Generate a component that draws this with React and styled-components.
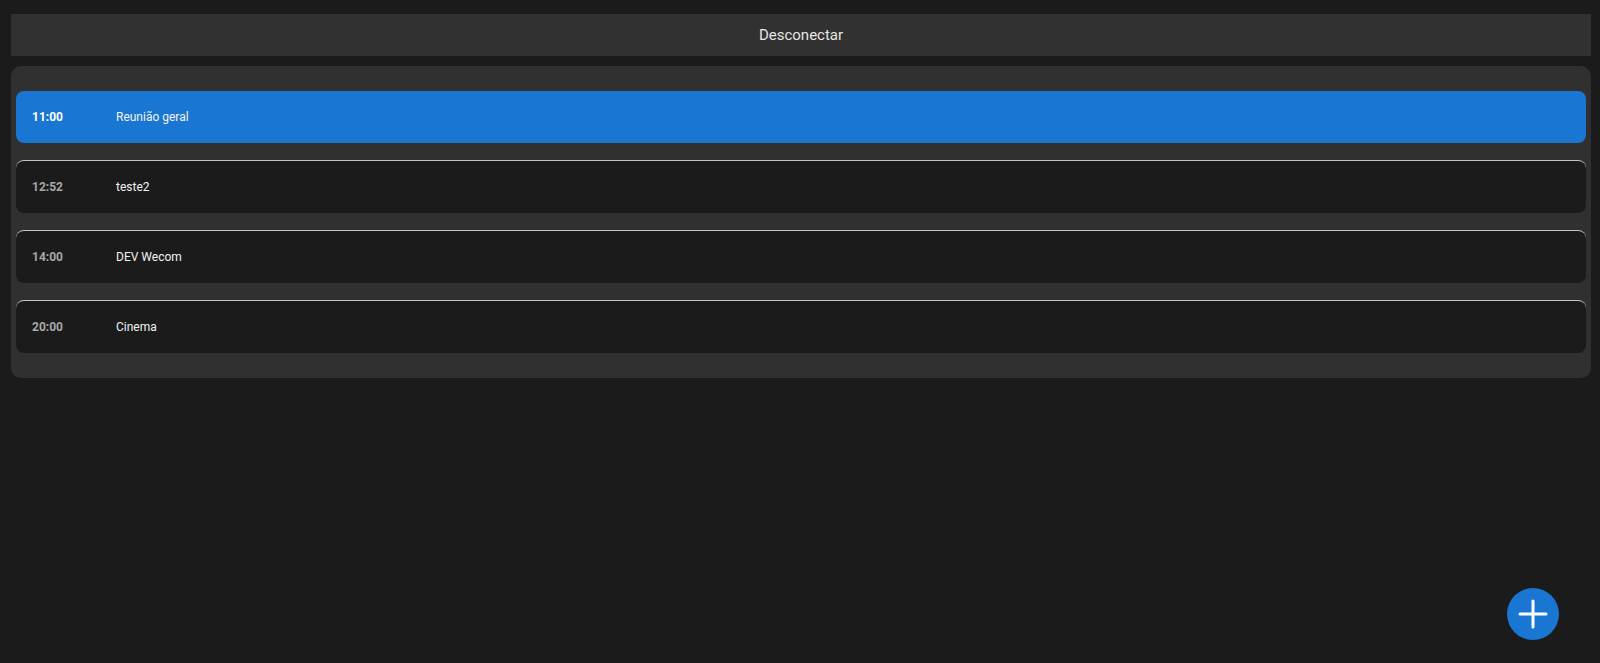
import React from "react";
import styled, { createGlobalStyle } from "styled-components";

const Global = createGlobalStyle`
  html, body { margin: 0; padding: 0; background: #1b1b1b; }
  body { font-family: Roboto, "Open Sans", sans-serif; }
`;

const Page = styled.div`
  min-height: 663px;
  box-sizing: border-box;
  padding: 14px 9px 0 11px;
  display: flex;
  flex-direction: column;
  gap: 10px;
  background: #1b1b1b;
`;

const Header = styled.div`
  height: 42px;
  background: #313131;
  display: flex;
  align-items: center;
  justify-content: center;
  color: #e6e6e6;
  font-size: 15px;
  cursor: pointer;
`;

const Card = styled.div`
  background: #303030;
  border-radius: 10px;
  padding: 25px 5px;
  display: flex;
  flex-direction: column;
  gap: 17px;
`;

const Row = styled.div`
  height: 52px;
  box-sizing: content-box;
  border-radius: 8px;
  display: flex;
  align-items: center;
  padding-left: 16px;
  background: ${(p) => (p.$active ? "#1a76d3" : "#1b1b1b")};
  border-top: ${(p) => (p.$active ? "none" : "1px solid #c4c4c4")};
`;

const Time = styled.span`
  width: 84px;
  font-size: 12px;
  font-weight: 700;
  color: ${(p) => (p.$active ? "#ffffff" : "#a8a8a8")};
`;

const Title = styled.span`
  font-size: 12px;
  color: #f2f2f2;
`;

const Fab = styled.button`
  position: fixed;
  right: 41px;
  bottom: 23px;
  width: 52px;
  height: 52px;
  border-radius: 50%;
  border: none;
  background: #1a76d3;
  display: flex;
  align-items: center;
  justify-content: center;
  padding: 0;
  cursor: pointer;
`;

const items = [
  { time: "11:00", title: "Reunião geral", active: true },
  { time: "12:52", title: "teste2" },
  { time: "14:00", title: "DEV Wecom" },
  { time: "20:00", title: "Cinema" },
];

export default function App() {
  return (
    <>
      <Global />
      <Page>
        <Header>Desconectar</Header>
        <Card>
          {items.map((it) => (
            <Row key={it.time} $active={it.active}>
              <Time $active={it.active}>{it.time}</Time>
              <Title>{it.title}</Title>
            </Row>
          ))}
        </Card>
        <Fab aria-label="Adicionar">
          <svg width="30" height="30" viewBox="0 0 30 30">
            <path d="M15 2v26M2 15h26" stroke="#fff" strokeWidth="3" strokeLinecap="round" fill="none" />
          </svg>
        </Fab>
      </Page>
    </>
  );
}
